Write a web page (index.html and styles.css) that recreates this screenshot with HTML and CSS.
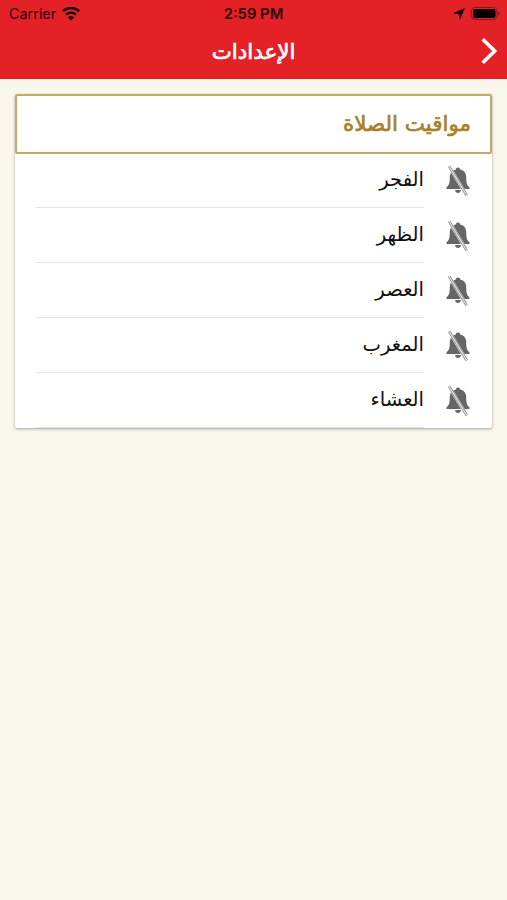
FILE: index.html
```
<!doctype html>
<html lang="ar" dir="rtl">
<head>
    <meta charset="UTF-8">
    <meta name="viewport" content="width=device-width, initial-scale=1.0">
    <title>الإعدادات</title>
    <link rel="stylesheet" href="styles.css">
</head>
<body>
    <svg width="0" height="0" class="symbols">
        <symbol id="bell-off" viewBox="0 0 26 32">
            <path fill="#666" d="M13 2.500c1.300 0 2.100.8 2.200 1.900 4 .9 6 3.900 6 7.600 0 6 .8 8.500 3.300 10.300v1.700H1.500v-1.700C4 20.500 4.800 18 4.800 12c0-3.700 2-6.700 6-7.600.1-1.100.9-1.900 2.200-1.900zM10 25h6c-.3 1.900-1.500 2.900-3 2.900S10.300 26.900 10 25z"/>
            <path stroke="#fff" stroke-width="3.200" d="M5 2.800l16 26.500"/>
            <path stroke="#777" stroke-width="2.600" d="M4.200 1.400l17.500 29"/>
            <path stroke="#e4e4e4" stroke-width="1.200" d="M4.200 1.400l17.500 29"/>
        </symbol>
    </svg>
    <header class="header">
        <div class="status-bar" dir="ltr">
            <div class="status-left">
                <span>Carrier</span>
                <svg width="18" height="14" viewBox="0 0 18 14" fill="none" stroke="#160203" stroke-width="2.500">
                    <path d="M.9 4.200c4.600-4.300 11.600-4.300 16.200 0M4 7.600c2.900-2.600 7.100-2.600 10 0"/>
                    <path fill="#160203" stroke="none" d="M5.900 10.300c1.800-1.600 4.400-1.600 6.200 0L9 13.400z"/>
                </svg>
            </div>
            <span class="time">2:59 PM</span>
            <div class="status-right">
                <svg width="12" height="12" viewBox="0 0 12 12"><path fill="#160203" stroke="#160203" stroke-width=".8" stroke-linejoin="round" d="M11.300.7L6.800 10.800 6.200 5.800 1 5.200z"/></svg>
                <svg width="30" height="14" viewBox="0 0 30 14">
                    <rect x=".5" y=".5" width="25.500" height="12" rx="3.500" fill="none" stroke="#8a1519"/>
                    <rect x="2" y="2" width="22.500" height="9" rx="2" fill="#080001"/>
                    <path fill="#8a1519" d="M27.300 4.500c2 .8 2 3.200 0 4z"/>
                </svg>
            </div>
        </div>
        <div class="nav-bar">
            <h1>الإعدادات</h1>
            <svg class="back" width="18" height="28" viewBox="0 0 18 28" fill="none" stroke="#fff" stroke-width="3.600"><path d="M2.700 2.200L14.700 14 2.700 25.800"/></svg>
        </div>
    </header>
    <main class="card">
        <h2>مواقيت الصلاة</h2>
        <ul class="prayers">
            <li><svg class="bell"><use href="#bell-off"/></svg><span>الفجر</span></li>
            <li><svg class="bell"><use href="#bell-off"/></svg><span>الظهر</span></li>
            <li><svg class="bell"><use href="#bell-off"/></svg><span>العصر</span></li>
            <li><svg class="bell"><use href="#bell-off"/></svg><span>المغرب</span></li>
            <li><svg class="bell"><use href="#bell-off"/></svg><span>العشاء</span></li>
        </ul>
    </main>
</body>
</html>
```
FILE: styles.css
```
:root {
    --red: #e32126;
    --gold: #a98127;
    --line: #e4e4e4;
}

* {
    box-sizing: border-box;
}

body {
    margin: 0;
    min-height: 100vh;
    background: #f9f6ed;
    font-family: "DejaVu Sans", sans-serif;
    color: #111;
}

.symbols {
    position: absolute;
}

.header {
    height: 79px;
    background: var(--red);
}

.status-bar {
    display: grid;
    grid-template-columns: 1fr auto 1fr;
    align-items: center;
    height: 27px;
    padding: 0 6px 0 9px;
    font-family: Inter, sans-serif;
    font-size: 14.4px;
    color: #2b0506;
}

.status-left,
.status-right {
    display: flex;
    align-items: center;
    gap: 6px;
}

.status-right {
    justify-content: flex-end;
}

.time {
    margin-right: 3px;
    font-size: 14.8px;
    font-weight: 600;
}

.nav-bar {
    position: relative;
    display: flex;
    justify-content: center;
    align-items: center;
    height: 48px;
}

/* regular weight thickened a little, the bold face runs too wide */
.nav-bar h1,
.card h2 {
    margin: 0;
    font-size: 21.4px;
    font-weight: normal;
    -webkit-text-stroke: 0.7px currentColor;
}

.nav-bar h1 {
    color: #fff;
}

.back {
    position: absolute;
    right: 9px;
}

.card {
    margin: 15px 15px 0;
    background: #fff;
    border-radius: 2px;
    box-shadow: 0 1px 3px rgba(0, 0, 0, 0.35);
}

.card h2 {
    display: flex;
    align-items: center;
    height: 60px;
    margin-bottom: -1px;
    padding: 0 19px 2px;
    border: 2px solid #c5a768;
    border-radius: 2px;
    color: var(--gold);
}

.prayers {
    margin: 0;
    padding: 0 21px 0 0;
    list-style: none;
}

.prayers li {
    display: flex;
    align-items: center;
    height: 55px;
}

.bell {
    width: 26px;
    height: 32px;
}

.prayers span {
    display: flex;
    align-items: center;
    flex: 1;
    height: 100%;
    margin: 0 21px;
    padding-bottom: 2px;
    border-bottom: 1px solid var(--line);
    font-size: 19.6px;
}
```
